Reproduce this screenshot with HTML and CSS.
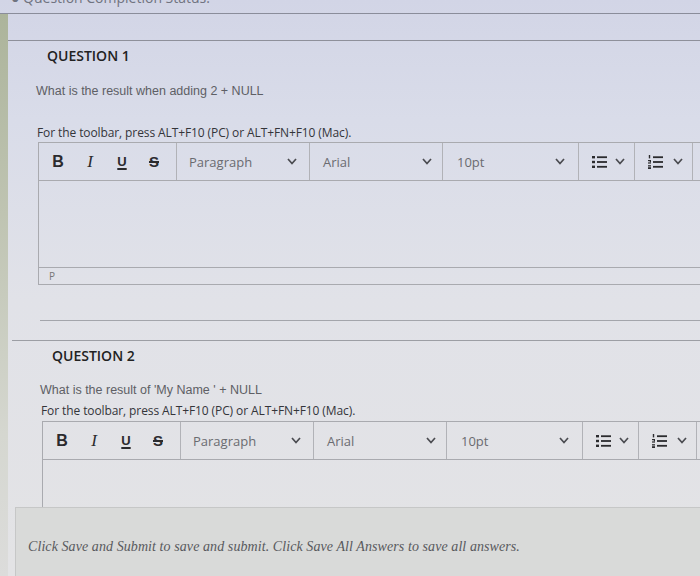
FILE: index.html
```html
<!DOCTYPE html>
<html lang="en">
  <head>
    <meta charset="UTF-8" />
    <meta name="viewport" content="width=device-width, initial-scale=1.0" />
    <title>Take Test</title>
    <link rel="stylesheet" href="styles.css">
  </head>

  <body>
    <div class="status">
      <span class="status-text">&#9679; Question Completion Status:</span>
    </div>

    <div class="layout">
      <div class="rail"></div>

      <main class="content">
        <div class="band"></div>

        <!-- Question 1 -->
        <section class="question q1">
          <h2 class="q-title">QUESTION 1</h2>
          <p class="q-text">What is the result when adding 2 + NULL</p>
          <p class="hint">For the toolbar, press ALT+F10 (PC) or ALT+FN+F10 (Mac).</p>

          <div class="editor">
            <div class="toolbar">
              <div class="tb-group tb-format">
                <span class="tb-btn tb-bold">B</span>
                <span class="tb-btn tb-italic">I</span>
                <span class="tb-btn tb-under">U</span>
                <span class="tb-btn tb-strike">S</span>
              </div>
              <div class="tb-group tb-select tb-para">
                <span>Paragraph</span>
                <svg class="chev" width="10" height="7" viewBox="0 0 10 7"><polyline points="1,1 5,5.5 9,1" /></svg>
              </div>
              <div class="tb-group tb-select tb-font">
                <span>Arial</span>
                <svg class="chev" width="10" height="7" viewBox="0 0 10 7"><polyline points="1,1 5,5.5 9,1" /></svg>
              </div>
              <div class="tb-group tb-select tb-size">
                <span>10pt</span>
                <svg class="chev" width="10" height="7" viewBox="0 0 10 7"><polyline points="1,1 5,5.5 9,1" /></svg>
              </div>
              <div class="tb-group tb-list">
                <svg class="list-icon" width="15" height="14" viewBox="0 0 15 14">
                  <rect x="0" y="1" width="3" height="2.4" />
                  <rect x="0" y="5.8" width="3" height="2.4" />
                  <rect x="0" y="10.6" width="3" height="2.4" />
                  <rect x="5" y="1.3" width="10" height="1.8" />
                  <rect x="5" y="6.1" width="10" height="1.8" />
                  <rect x="5" y="10.9" width="10" height="1.8" />
                </svg>
                <svg class="chev" width="10" height="7" viewBox="0 0 10 7"><polyline points="1,1 5,5.5 9,1" /></svg>
              </div>
              <div class="tb-group tb-list tb-num">
                <svg class="list-icon" width="15" height="14" viewBox="0 0 15 14">
                  <rect x="0.8" y="0" width="1.4" height="3.4" />
                  <rect x="0" y="5" width="3" height="1.2" />
                  <rect x="1.8" y="6" width="1.2" height="1.4" />
                  <rect x="0" y="7.4" width="3" height="1.2" />
                  <rect x="0" y="10.2" width="3" height="1.1" />
                  <rect x="0" y="11.7" width="3" height="1.1" />
                  <rect x="0" y="13" width="3" height="1" />
                  <rect x="5" y="1.3" width="10" height="1.8" />
                  <rect x="5" y="6.1" width="10" height="1.8" />
                  <rect x="5" y="10.9" width="10" height="1.8" />
                </svg>
                <svg class="chev" width="10" height="7" viewBox="0 0 10 7"><polyline points="1,1 5,5.5 9,1" /></svg>
              </div>
              <div class="tb-group tb-rest"></div>
            </div>
            <div class="editor-body"></div>
            <div class="editor-path">P</div>
          </div>

          <hr class="q-sep" />
        </section>

        <!-- Question 2 -->
        <section class="question q2">
          <h2 class="q-title">QUESTION 2</h2>
          <p class="q-text">What is the result of 'My Name ' + NULL</p>
          <p class="hint">For the toolbar, press ALT+F10 (PC) or ALT+FN+F10 (Mac).</p>

          <div class="editor editor-open">
            <div class="toolbar">
              <div class="tb-group tb-format">
                <span class="tb-btn tb-bold">B</span>
                <span class="tb-btn tb-italic">I</span>
                <span class="tb-btn tb-under">U</span>
                <span class="tb-btn tb-strike">S</span>
              </div>
              <div class="tb-group tb-select tb-para">
                <span>Paragraph</span>
                <svg class="chev" width="10" height="7" viewBox="0 0 10 7"><polyline points="1,1 5,5.5 9,1" /></svg>
              </div>
              <div class="tb-group tb-select tb-font">
                <span>Arial</span>
                <svg class="chev" width="10" height="7" viewBox="0 0 10 7"><polyline points="1,1 5,5.5 9,1" /></svg>
              </div>
              <div class="tb-group tb-select tb-size">
                <span>10pt</span>
                <svg class="chev" width="10" height="7" viewBox="0 0 10 7"><polyline points="1,1 5,5.5 9,1" /></svg>
              </div>
              <div class="tb-group tb-list">
                <svg class="list-icon" width="15" height="14" viewBox="0 0 15 14">
                  <rect x="0" y="1" width="3" height="2.4" />
                  <rect x="0" y="5.8" width="3" height="2.4" />
                  <rect x="0" y="10.6" width="3" height="2.4" />
                  <rect x="5" y="1.3" width="10" height="1.8" />
                  <rect x="5" y="6.1" width="10" height="1.8" />
                  <rect x="5" y="10.9" width="10" height="1.8" />
                </svg>
                <svg class="chev" width="10" height="7" viewBox="0 0 10 7"><polyline points="1,1 5,5.5 9,1" /></svg>
              </div>
              <div class="tb-group tb-list tb-num">
                <svg class="list-icon" width="15" height="14" viewBox="0 0 15 14">
                  <rect x="0.8" y="0" width="1.4" height="3.4" />
                  <rect x="0" y="5" width="3" height="1.2" />
                  <rect x="1.8" y="6" width="1.2" height="1.4" />
                  <rect x="0" y="7.4" width="3" height="1.2" />
                  <rect x="0" y="10.2" width="3" height="1.1" />
                  <rect x="0" y="11.7" width="3" height="1.1" />
                  <rect x="0" y="13" width="3" height="1" />
                  <rect x="5" y="1.3" width="10" height="1.8" />
                  <rect x="5" y="6.1" width="10" height="1.8" />
                  <rect x="5" y="10.9" width="10" height="1.8" />
                </svg>
                <svg class="chev" width="10" height="7" viewBox="0 0 10 7"><polyline points="1,1 5,5.5 9,1" /></svg>
              </div>
              <div class="tb-group tb-rest"></div>
            </div>
            <div class="editor-body"></div>
          </div>
        </section>

        <div class="footer">
          <p class="footer-text">Click Save and Submit to save and submit. Click Save All Answers to save all answers.</p>
        </div>
      </main>
    </div>
  </body>
</html>
```

FILE: styles.css
```css
* {
  margin: 0;
  padding: 0;
  box-sizing: border-box;
}

html,
body {
  height: 100%;
  overflow: hidden;
}

body {
  font-family: "Open Sans", Arial, sans-serif;
  background: linear-gradient(to bottom, #d2d5e6 0, #d9dce9 120px, #e1e2e8 300px, #e3e3e5 576px);
  color: #333;
}

/* top status strip, cut off by the window */
.status {
  height: 14px;
  overflow: hidden;
  border-bottom: 1px solid #8a8d9a;
}

.status-text {
  display: block;
  margin: -10px 0 0 11px;
  font-size: 14px;
  line-height: 16px;
  color: #70737f;
}

.layout {
  display: flex;
  min-height: 562px;
}

.rail {
  width: 8px;
  flex: none;
  background: linear-gradient(to bottom, #acb49b 0, #bfc4b2 200px, #d5d7d0 420px, #dcdcdb 562px);
}

.content {
  flex: 1;
  min-width: 0;
}

.band {
  height: 27px;
  border-bottom: 1px solid #8e909a;
}

/* questions */
.q-title {
  font-size: 14px;
  font-weight: 600;
  line-height: 18px;
  color: #222;
}

.q-text {
  font-family: "Liberation Sans", Arial, sans-serif;
  font-size: 12.5px;
  line-height: 16px;
  color: #5e5f65;
}

.hint {
  font-size: 12px;
  line-height: 16px;
  letter-spacing: -0.1px;
  color: #34353a;
}

.q1 {
  padding: 6px 0 19px 0;
}
.q1 .q-title {
  margin-left: 39px;
}
.q1 .q-text {
  margin: 18px 0 0 28px;
}
.q1 .hint {
  margin: 26px 0 0 29px;
}
.q1 .editor {
  margin: 1px 0 0 30px;
}

.q-sep {
  border: none;
  border-top: 1px solid #a3a5ab;
  margin: 35px 0 0 32px;
}

.q2 {
  margin-left: 4px;
  padding-top: 6px;
  border-top: 1px solid #9c9ea4;
}
.q2 .q-title {
  margin-left: 40px;
}
.q2 .q-text {
  margin: 17px 0 0 28px;
}
.q2 .hint {
  margin: 5px 0 0 29px;
}
.q2 .editor {
  margin: 2px 0 0 30px;
}

/* editor, its right edge lies past the window */
.editor {
  border: 1px solid #a9aaaf;
  border-right: none;
}

.editor-open {
  border-bottom: none;
}

.toolbar {
  display: flex;
  height: 38px;
  border-bottom: 1px solid #a9aaaf;
}

.tb-group {
  display: flex;
  align-items: center;
  border-right: 1px solid #b1b2b7;
  flex: none;
}

.tb-format {
  width: 138px;
  padding-left: 3px;
}

.tb-btn {
  width: 32px;
  text-align: center;
  font-size: 16px;
  line-height: 20px;
  color: #2b2b2e;
}

.tb-bold {
  font-family: "Liberation Sans", Arial, sans-serif;
  font-weight: bold;
}

.tb-italic {
  font-family: "Liberation Serif", serif;
  font-style: italic;
  font-size: 17px;
}

.tb-under {
  font-family: "Liberation Sans", Arial, sans-serif;
  font-weight: bold;
  font-size: 13px;
  text-decoration: underline;
  text-decoration-thickness: 2px;
  text-underline-offset: 2px;
}

.tb-strike {
  font-family: "Liberation Sans", Arial, sans-serif;
  font-weight: bold;
  font-size: 15px;
  text-decoration: line-through;
  text-decoration-thickness: 1.5px;
}

.tb-select {
  justify-content: space-between;
  font-size: 13px;
  color: #6a6b70;
}

.tb-para {
  width: 133px;
  padding: 0 12px 0 12px;
}

.tb-font {
  width: 133px;
  padding: 0 10px 0 13px;
}

.tb-size {
  width: 136px;
  padding: 0 13px 0 14px;
}

.tb-list {
  width: 56px;
  justify-content: space-between;
  padding: 0 9px 0 13px;
}

.tb-num {
  width: 58px;
}

.tb-rest {
  flex: 1;
  border-right: none;
}

.chev polyline {
  fill: none;
  stroke: #4a4b50;
  stroke-width: 1.7;
}

.list-icon {
  fill: #2b2b2e;
}

.editor-body {
  height: 86px;
}

.editor-open .editor-body {
  height: 47px;
}

.editor-path {
  height: 17px;
  border-top: 1px solid #a9aaaf;
  padding-left: 10px;
  font-size: 10px;
  line-height: 16px;
  color: #777;
}

/* bottom save bar */
.footer {
  margin-left: 7px;
  height: 80px;
  padding: 30px 0 0 12px;
  background-color: #d9dad9;
  border: 1px solid #c6c7c7;
  border-right: none;
}

.footer-text {
  font-family: "Liberation Serif", "Times New Roman", serif;
  font-style: italic;
  font-size: 14px;
  line-height: 18px;
  letter-spacing: 0.08px;
  color: #58595d;
}
```
